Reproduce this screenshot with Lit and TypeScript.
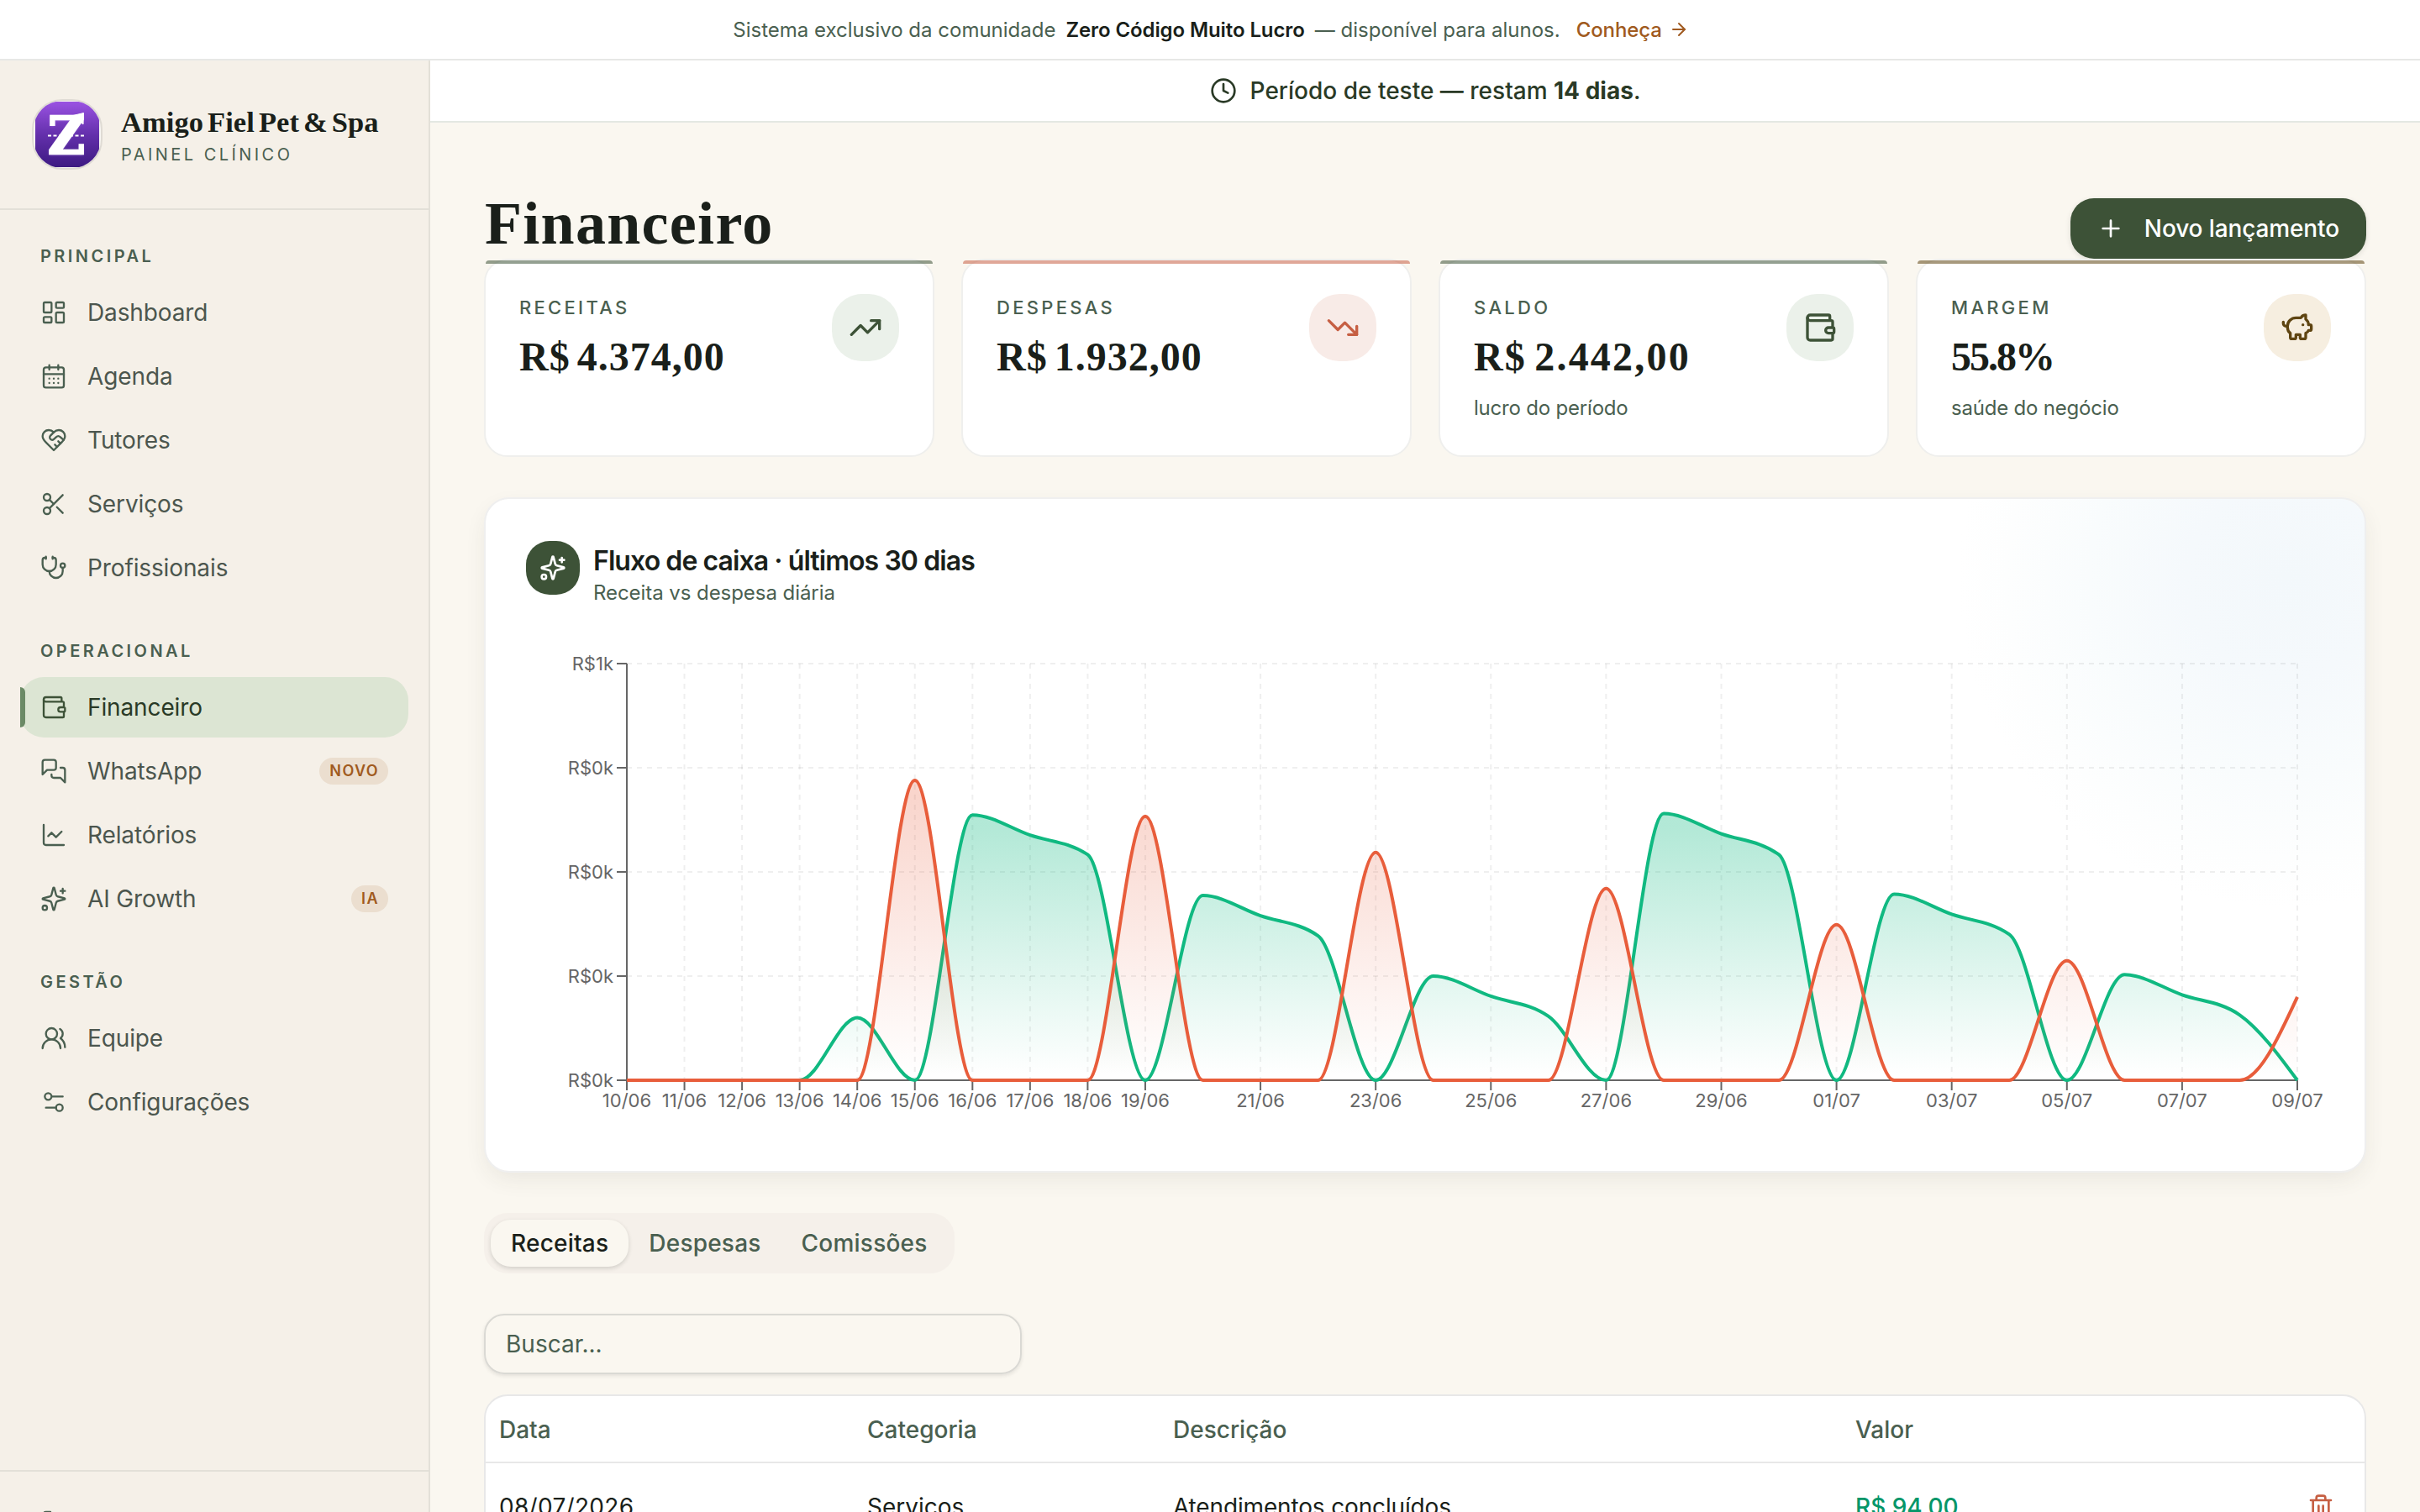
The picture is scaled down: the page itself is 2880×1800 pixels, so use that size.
import { LitElement, html, css, svg, nothing } from "lit";
import { customElement, property } from "lit/decorators.js";
import { styleMap } from "lit/directives/style-map.js";

// 24x24 stroke icons
const icons: Record<string, unknown> = {
    dashboard: svg`<rect width="7" height="9" x="3" y="3" rx="1"/><rect width="7" height="5" x="14" y="3" rx="1"/><rect width="7" height="9" x="14" y="12" rx="1"/><rect width="7" height="5" x="3" y="16" rx="1"/>`,
    calendar: svg`<path d="M8 2v4M16 2v4"/><rect width="18" height="18" x="3" y="4" rx="2"/><path d="M3 10h18M8 14h.01M12 14h.01M16 14h.01M8 18h.01M12 18h.01M16 18h.01"/>`,
    heart: svg`<path d="M19 14c1.49-1.46 3-3.21 3-5.5A5.5 5.5 0 0 0 16.5 3c-1.76 0-3 .5-4.5 2-1.5-1.5-2.74-2-4.5-2A5.5 5.5 0 0 0 2 8.5c0 2.3 1.5 4.05 3 5.5l7 7Z"/><path d="M12 5 9.04 7.96a2.17 2.17 0 0 0 0 3.08c.82.82 2.13.85 3 .07l2.07-1.9a2.82 2.82 0 0 1 3.79 0l2.96 2.66"/><path d="m18 15-2-2"/><path d="m15 18-2-2"/>`,
    scissors: svg`<circle cx="6" cy="6" r="3"/><path d="M8.12 8.12 12 12"/><path d="M20 4 8.12 15.88"/><circle cx="6" cy="18" r="3"/><path d="M14.8 14.8 20 20"/>`,
    stethoscope: svg`<path d="M11 2v2M5 2v2"/><path d="M5 3H4a2 2 0 0 0-2 2v4a6 6 0 0 0 12 0V5a2 2 0 0 0-2-2h-1"/><path d="M8 15a6 6 0 0 0 12 0v-3"/><circle cx="20" cy="10" r="2"/>`,
    wallet: svg`<path d="M19 7V4a1 1 0 0 0-1-1H5a2 2 0 0 0 0 4h15a1 1 0 0 1 1 1v4h-3a2 2 0 0 0 0 4h3a1 1 0 0 0 1-1v-2a1 1 0 0 0-1-1"/><path d="M3 5v14a2 2 0 0 0 2 2h15a1 1 0 0 0 1-1v-4"/>`,
    chat: svg`<path d="M14 9a2 2 0 0 1-2 2H6l-4 4V4a2 2 0 0 1 2-2h8a2 2 0 0 1 2 2z"/><path d="M18 9h2a2 2 0 0 1 2 2v11l-4-4h-6a2 2 0 0 1-2-2v-1"/>`,
    chart: svg`<path d="M3 3v16a2 2 0 0 0 2 2h16"/><path d="m19 9-5 5-4-4-3 3"/>`,
    sparkles: svg`<path d="M9.937 15.5A2 2 0 0 0 8.5 14.063l-6.135-1.582a.5.5 0 0 1 0-.962L8.5 9.936A2 2 0 0 0 9.937 8.5l1.582-6.135a.5.5 0 0 1 .963 0L14.063 8.5A2 2 0 0 0 15.5 9.937l6.135 1.581a.5.5 0 0 1 0 .964L15.5 14.063a2 2 0 0 0-1.437 1.437l-1.582 6.135a.5.5 0 0 1-.963 0z"/><path d="M20 3v4M22 5h-4"/><circle cx="4" cy="20" r="2"/>`,
    users: svg`<path d="M18 21a8 8 0 0 0-16 0"/><circle cx="10" cy="8" r="5"/><path d="M22 20c0-3.37-2-6.5-4-8a5 5 0 0 0-.45-8.3"/>`,
    settings: svg`<path d="M20 7h-9M14 17H5"/><circle cx="17" cy="17" r="3"/><circle cx="7" cy="7" r="3"/>`,
    logout: svg`<path d="M9 21H5a2 2 0 0 1-2-2V5a2 2 0 0 1 2-2h4"/><path d="m16 17 5-5-5-5"/><path d="M21 12H9"/>`,
    clock: svg`<circle cx="12" cy="12" r="10"/><path d="M12 6v6l4 2"/>`,
    arrow: svg`<path d="M5 12h14"/><path d="m12 5 7 7-7 7"/>`,
    plus: svg`<path d="M5 12h14M12 5v14"/>`,
    up: svg`<path d="M16 7h6v6"/><path d="m22 7-8.5 8.5-5-5L2 17"/>`,
    down: svg`<path d="M16 17h6v-6"/><path d="m22 17-8.5-8.5-5 5L2 7"/>`,
    pig: svg`<path d="M11 17h3v2a1 1 0 0 0 1 1h2a1 1 0 0 0 1-1v-3a3.16 3.16 0 0 0 2-2h1a1 1 0 0 0 1-1v-2a1 1 0 0 0-1-1h-1a5 5 0 0 0-2-4V3a4 4 0 0 0-3.2 1.6l-.3.4H11a6 6 0 0 0-6 6v1a5 5 0 0 0 2 4v3a1 1 0 0 0 1 1h2a1 1 0 0 0 1-1z"/><path d="M16 10h.01"/><path d="M2 8v1a2 2 0 0 0 2 2h1"/>`,
    trash: svg`<path d="M3 6h18M19 6v14a2 2 0 0 1-2 2H7a2 2 0 0 1-2-2V6M8 6V4a2 2 0 0 1 2-2h4a2 2 0 0 1 2 2v2M10 11v6M14 11v6"/>`,
};

@customElement("line-icon")
export class LineIcon extends LitElement
{
    static styles = css`
        :host {
            display: inline-flex;
            flex: none;
        }
        svg {
            fill: none;
            stroke: currentColor;
            stroke-linecap: round;
            stroke-linejoin: round;
        }
    `;

    @property()
    name = "";

    @property({ type: Number })
    size = 32;

    @property({ type: Number })
    weight = 2;

    render()
    {
        return html`
            <svg width=${this.size} height=${this.size} viewBox="0 0 24 24" stroke-width=${this.weight}>
                ${icons[this.name]}
            </svg>
        `;
    }
}

interface NavItem { icon: string; label: string; badge?: string; active?: boolean }

const nav: { title: string; items: NavItem[] }[] = [
    {
        title: "Principal",
        items: [
            { icon: "dashboard", label: "Dashboard" },
            { icon: "calendar", label: "Agenda" },
            { icon: "heart", label: "Tutores" },
            { icon: "scissors", label: "Serviços" },
            { icon: "stethoscope", label: "Profissionais" },
        ],
    },
    {
        title: "Operacional",
        items: [
            { icon: "wallet", label: "Financeiro", active: true },
            { icon: "chat", label: "WhatsApp", badge: "Novo" },
            { icon: "chart", label: "Relatórios" },
            { icon: "sparkles", label: "AI Growth", badge: "IA" },
        ],
    },
    {
        title: "Gestão",
        items: [
            { icon: "users", label: "Equipe" },
            { icon: "settings", label: "Configurações" },
        ],
    },
];

@customElement("app-sidebar")
export class AppSidebar extends LitElement
{
    static styles = css`
        :host {
            display: flex;
            flex-direction: column;
            box-sizing: border-box;
            width: 512px;
            background: #f5f0e8;
            border-right: 2px solid #e3e0d8;
        }
        header {
            display: flex;
            align-items: center;
            gap: 22px;
            box-sizing: border-box;
            height: 178px;
            padding: 0 0 0 38px;
            border-bottom: 2px solid #e3e0d8;
        }
        .logo {
            flex: none;
            width: 84px;
            height: 84px;
        }
        .logo text {
            font: bold 62px "DejaVu Serif", serif;
        }
        .brand {
            margin-top: 4px;
            font: bold 34.5px/40px "Liberation Serif", serif;
            letter-spacing: 0.05px;
            word-spacing: -3.6px;
            color: #1a1f1a;
            white-space: nowrap;
        }
        .tagline {
            margin-top: 4px;
            font-size: 20px;
            line-height: 30px;
            letter-spacing: 3.45px;
            text-transform: uppercase;
            color: #4a5f50;
        }
        nav {
            flex: 1;
            padding: 39px 24px 0;
        }
        h2 {
            margin: 0 0 15px 24px;
            font-size: 20px;
            line-height: 32px;
            font-weight: 600;
            letter-spacing: 3.45px;
            text-transform: uppercase;
            color: #4a5f50;
        }
        section {
            display: flex;
            flex-direction: column;
            margin-bottom: 47px;
        }
        .item {
            position: relative;
            display: flex;
            align-items: center;
            gap: 24px;
            height: 72px;
            padding: 0 24px;
            border-radius: 28px;
            font-size: 28px;
            letter-spacing: -0.12px;
            color: #4c564e;
        }
        .item + .item {
            margin-top: 4px;
        }
        .item line-icon {
            color: #4a5f50;
        }
        .item.active {
            background: #dce5d3;
            color: #2a3a26;
        }
        .item.active line-icon {
            color: #3d5237;
        }
        .item.active::before {
            content: "";
            position: absolute;
            left: 0;
            top: 12px;
            width: 6px;
            height: 48px;
            border-radius: 0 6px 6px 0;
            background: #6b8a66;
        }
        .badge {
            margin-left: auto;
            padding: 0 11px 0 12px;
            border-radius: 16px;
            background: #ebdecf;
            color: #a05a20;
            font-size: 18px;
            line-height: 32px;
            font-weight: 600;
            letter-spacing: 1.4px;
            text-transform: uppercase;
        }
        footer {
            box-sizing: border-box;
            height: 50px;
            padding: 24px;
            border-top: 2px solid #e3e0d8;
            overflow: hidden;
        }
    `;

    render()
    {
        return html`
            <header>
                ${this.renderLogo()}
                <div>
                    <div class="brand">Amigo Fiel Pet &amp; Spa</div>
                    <div class="tagline">Painel clínico</div>
                </div>
            </header>
            <nav>
                ${nav.map(group => html`
                    <section>
                        <h2>${group.title}</h2>
                        ${group.items.map(item => this.renderItem(item))}
                    </section>
                `)}
            </nav>
            <footer>
                <div class="item"><line-icon name="logout" weight="1.75"></line-icon>Sair</div>
            </footer>
        `;
    }

    renderItem(item: NavItem)
    {
        return html`
            <div class="item ${item.active ? "active" : ""}">
                <line-icon name=${item.icon} weight="1.75"></line-icon>
                ${item.label}
                ${item.badge ? html`<span class="badge">${item.badge}</span>` : nothing}
            </div>
        `;
    }

    renderLogo()
    {
        return html`
            <svg class="logo" viewBox="0 0 84 84">
                <defs>
                    <linearGradient id="violet" x1="0" y1="0" x2="0" y2="1">
                        <stop offset="0" stop-color="#9a52e2"/>
                        <stop offset="0.5" stop-color="#6430ac"/>
                        <stop offset="1" stop-color="#3d1a82"/>
                    </linearGradient>
                    <clipPath id="frame"><rect x="2" y="2" width="80" height="80" rx="34"/></clipPath>
                    <filter id="glow" x="-30%" y="-30%" width="160%" height="160%">
                        <feGaussianBlur stdDeviation="1.6"/>
                    </filter>
                </defs>
                <rect x="1" y="1" width="82" height="82" rx="35" fill="#f8f6f2" stroke="#dfdbd4" stroke-width="2"/>
                <rect x="4" y="3" width="76" height="78" fill="url(#violet)" clip-path="url(#frame)"/>
                <g fill="#c9a6ff" opacity="0.6" filter="url(#glow)">
                    <text x="19" y="66" textLength="44" lengthAdjust="spacingAndGlyphs">Z</text>
                </g>
                <g fill="#fff" stroke="#fff">
                    <text x="19" y="64.500" textLength="44" lengthAdjust="spacingAndGlyphs" stroke-width="2.4">Z</text>
                    <path d="M49 19.500 61.500 16.500 61 30Z" stroke-width="1"/>
                    <path d="M19 43.500h44" stroke-width="2" stroke-dasharray="4 2.500" fill="none"/>
                </g>
            </svg>
        `;
    }
}

const stats = [
    { label: "Receitas", value: "R$ 4.374,00", icon: "up", tone: "green", tracking: 1 },
    { label: "Despesas", value: "R$ 1.932,00", icon: "down", tone: "red", tracking: 1 },
    { label: "Saldo", value: "R$ 2.442,00", note: "lucro do período", icon: "wallet", tone: "green", tracking: 2.2 },
    { label: "Margem", value: "55.8%", note: "saúde do negócio", icon: "pig", tone: "amber", tracking: -2 },
];

@customElement("stat-card")
export class StatCard extends LitElement
{
    static styles = css`
        :host {
            position: relative;
            display: flex;
            justify-content: space-between;
            align-items: flex-start;
            box-sizing: border-box;
            height: 236px;
            padding: 40px;
            background: #fff;
            border: 2px solid #efefed;
            border-radius: 28px;
        }
        .line {
            position: absolute;
            inset: 0 0 auto;
            height: 4px;
            border-radius: 4px 4px 0 0;
            background: currentColor;
            opacity: 0.55;
        }
        .label {
            font-size: 22px;
            line-height: 32px;
            font-weight: 500;
            letter-spacing: 3.3px;
            text-transform: uppercase;
            color: #4a5f50;
        }
        .value {
            margin-top: 15px;
            font: bold 48px/56px "Liberation Serif", serif;
            word-spacing: -5px;
            color: #1a1f1a;
            white-space: nowrap;
        }
        .note {
            margin-top: 17px;
            font-size: 24px;
            line-height: 32px;
            letter-spacing: -0.2px;
            color: #4a5f50;
        }
        .icon {
            display: flex;
            align-items: center;
            justify-content: center;
            width: 80px;
            height: 80px;
            border-radius: 36px;
        }
        .green { color: #3d5237; }
        .green.icon { background: #ebf1ea; }
        .red { color: #c65f43; }
        .red.icon { background: #f8ebe7; }
        .amber { color: #5f4512; }
        .amber.icon { background: #f6eee0; }
    `;

    @property({ attribute: false })
    stat: any = {};

    render()
    {
        const s = this.stat;
        return html`
            <div class="line ${s.tone}"></div>
            <div>
                <div class="label">${s.label}</div>
                <div class="value" style=${styleMap({ letterSpacing: `${s.tracking}px` })}>${s.value}</div>
                ${s.note ? html`<div class="note">${s.note}</div>` : nothing}
            </div>
            <div class="icon ${s.tone}"><line-icon name=${s.icon} size="40"></line-icon></div>
        `;
    }
}

const days = [
    "10/06", "11/06", "12/06", "13/06", "14/06", "15/06", "16/06", "17/06", "18/06", "19/06",
    "20/06", "21/06", "22/06", "23/06", "24/06", "25/06", "26/06", "27/06", "28/06", "29/06",
    "30/06", "01/07", "02/07", "03/07", "04/07", "05/07", "06/07", "07/07", "08/07", "09/07",
];
const income = [
    0, 0, 0, 0, 90, 0, 382, 353, 325, 0, 266, 237, 208, 0, 150, 121, 92, 0, 384, 355,
    325, 0, 268, 239, 210, 0, 152, 123, 94, 0,
];
const expense = [
    0, 0, 0, 0, 0, 432, 0, 0, 0, 380, 0, 0, 0, 328, 0, 0, 0, 276, 0, 0,
    0, 224, 0, 0, 0, 172, 0, 0, 0, 120,
];

@customElement("cash-chart")
export class CashChart extends LitElement
{
    static styles = css`
        :host {
            display: block;
        }
        svg {
            display: block;
            overflow: visible;
        }
        text {
            font-size: 22px;
            fill: #666;
        }
    `;

    left = 120;
    top = 20;
    plotWidth = 1988;
    plotHeight = 496;

    x(i: number)
    {
        return this.left + i * this.plotWidth / (days.length - 1);
    }

    y(value: number)
    {
        return this.top + this.plotHeight * (1 - value / 600);
    }

    // monotone cubic through all the points
    curve(values: number[])
    {
        const n = values.length;
        const h = this.plotWidth / (n - 1);
        const ys = values.map(v => this.y(v));
        const slopes = ys.slice(1).map((y, i) => (y - ys[i]) / h);
        const tangents = ys.map((_, i) => {
            if (i === 0 || i === n - 1) return 0;
            const a = slopes[i - 1];
            const b = slopes[i];
            return (Math.sign(a) + Math.sign(b)) * Math.min(Math.abs(a), Math.abs(b), Math.abs(a + b) / 4) || 0;
        });
        tangents[0] = (3 * slopes[0] - tangents[1]) / 2;
        tangents[n - 1] = (3 * slopes[n - 2] - tangents[n - 2]) / 2;

        let d = `M${this.x(0)},${ys[0]}`;
        for (let i = 1; i < n; i++) {
            const x0 = this.x(i - 1);
            const x1 = this.x(i);
            d += `C${x0 + h / 3},${ys[i - 1] + tangents[i - 1] * h / 3} ${x1 - h / 3},${ys[i] - tangents[i] * h / 3} ${x1},${ys[i]}`;
        }
        return d;
    }

    area(values: number[])
    {
        return `${this.curve(values)}L${this.x(days.length - 1)},${this.y(0)}L${this.x(0)},${this.y(0)}Z`;
    }

    render()
    {
        const right = this.left + this.plotWidth;
        const bottom = this.top + this.plotHeight;
        const ticksX = days.map((_, i) => i).filter(i => i < 10 || i % 2 === 1);
        const ticksY = [0, 150, 300, 450, 600];
        return html`
            <svg width="2140" height="600">
                <defs>
                    <linearGradient id="in" x1="0" y1="0" x2="0" y2="1">
                        <stop offset="0.05" stop-color="#10b981" stop-opacity="0.32"/>
                        <stop offset="0.98" stop-color="#10b981" stop-opacity="0"/>
                    </linearGradient>
                    <linearGradient id="out" x1="0" y1="0" x2="0" y2="1">
                        <stop offset="0.05" stop-color="#e85d3b" stop-opacity="0.26"/>
                        <stop offset="0.98" stop-color="#e85d3b" stop-opacity="0"/>
                    </linearGradient>
                </defs>
                <g stroke="#1a1f1a" stroke-opacity="0.07" stroke-width="2" stroke-dasharray="6 6">
                    ${ticksY.map(v => svg`<line x1=${this.left} x2=${right} y1=${this.y(v)} y2=${this.y(v)}/>`)}
                    ${ticksX.map(i => svg`<line x1=${this.x(i)} x2=${this.x(i)} y1=${this.top} y2=${bottom}/>`)}
                </g>
                <g stroke="#666" stroke-width="2">
                    <line x1=${this.left} x2=${this.left} y1=${this.top} y2=${bottom}/>
                    <line x1=${this.left} x2=${right} y1=${bottom} y2=${bottom}/>
                    ${ticksY.map(v => svg`<line x1=${this.left - 12} x2=${this.left} y1=${this.y(v)} y2=${this.y(v)}/>`)}
                    ${ticksX.map(i => svg`<line x1=${this.x(i)} x2=${this.x(i)} y1=${bottom} y2=${bottom + 12}/>`)}
                </g>
                ${ticksY.map(v => svg`<text x=${this.left - 16} y=${this.y(v) + 8} text-anchor="end">R$${Math.round(v / 1000)}k</text>`)}
                ${ticksX.map(i => svg`<text x=${this.x(i)} y=${bottom + 32} text-anchor="middle">${days[i]}</text>`)}
                <path d=${this.area(income)} fill="url(#in)"/>
                <path d=${this.curve(income)} fill="none" stroke="#10b981" stroke-width="4"/>
                <path d=${this.area(expense)} fill="url(#out)"/>
                <path d=${this.curve(expense)} fill="none" stroke="#e85d3b" stroke-width="4"/>
            </svg>
        `;
    }
}

@customElement("app-root")
export class AppRoot extends LitElement
{
    static styles = css`
        :host {
            display: flex;
            flex-direction: column;
            box-sizing: border-box;
            width: 2880px;
            height: 1800px;
            overflow: hidden;
            background: #faf7f0;
            color: #1a1f1a;
            font-family: Inter, sans-serif;
            font-size: 28px;
        }
        .banner {
            display: flex;
            align-items: center;
            justify-content: center;
            flex: none;
            box-sizing: border-box;
            height: 72px;
            background: #fff;
            border-bottom: 2px solid #e7e8e6;
            font-size: 24px;
            color: #4a5f50;
        }
        .banner b {
            margin: 0 12px;
            font-weight: 600;
            letter-spacing: -0.1px;
            color: #1a1f1a;
        }
        .banner a {
            display: flex;
            align-items: center;
            gap: 8px;
            margin: 0 -2px 0 19px;
            font-weight: 500;
            letter-spacing: -0.1px;
            color: #a05a20;
        }
        .shell {
            display: flex;
            flex: 1;
            min-height: 0;
        }
        main {
            flex: 1;
            min-width: 0;
        }
        .trial {
            display: flex;
            align-items: center;
            justify-content: center;
            gap: 16px;
            box-sizing: border-box;
            height: 74px;
            background: #fff;
            border-bottom: 2px solid #e4e8e3;
            color: #2a3a26;
            font-weight: 500;
        }
        .trial b {
            font-weight: 700;
        }
        .page {
            padding: 90px 64px 0;
        }
        .heading {
            display: flex;
            justify-content: space-between;
            height: 72px;
        }
        h1 {
            margin: -12px 0 0 1px;
            font: bold 72px/84px "Liberation Serif", serif;
            letter-spacing: 1.3px;
        }
        .create {
            display: flex;
            align-items: center;
            gap: 24px;
            box-sizing: border-box;
            height: 72px;
            padding: 0 32px;
            border-radius: 28px;
            background: #3d5237;
            box-shadow: 0 2px 6px rgba(26, 31, 26, 0.12);
            color: #fff;
            font-weight: 500;
            letter-spacing: -0.12px;
        }
        .stats {
            display: grid;
            grid-template-columns: repeat(4, 1fr);
            gap: 32px;
        }
        .card {
            box-sizing: border-box;
            height: 804px;
            margin-top: 48px;
            padding: 50px 48px;
            border: 2px solid #efefef;
            border-radius: 30px;
            background: radial-gradient(circle 390px at 2142px 96px, #f3f8fb, #f5f9fc 30%, #f9fcfd 60%, #fdfefe 85%, #fff) #fff;
            background-clip: padding-box;
            box-shadow: 0 10px 28px -4px rgba(60, 60, 40, 0.09);
        }
        .card-head {
            display: flex;
            gap: 16px;
        }
        .card-icon {
            display: flex;
            align-items: center;
            justify-content: center;
            width: 64px;
            height: 64px;
            border-radius: 28px;
            background: #3d5237;
            color: #fff;
        }
        .card-title {
            padding-top: 2px;
            font-size: 32px;
            line-height: 44px;
            font-weight: 600;
            letter-spacing: -0.92px;
        }
        .card-note {
            font-size: 24px;
            line-height: 32px;
            letter-spacing: -0.06px;
            color: #4a5f50;
        }
        cash-chart {
            margin-top: 48px;
        }
        .tabs {
            display: flex;
            box-sizing: border-box;
            width: max-content;
            height: 72px;
            margin-top: 48px;
            padding: 8px;
            border-radius: 28px;
            background: #f5f0ea;
            color: #4a5f50;
            font-weight: 500;
            letter-spacing: 0.22px;
        }
        .tab {
            padding: 0 24px;
            line-height: 56px;
            border-radius: 24px;
        }
        .tab.active {
            background: #faf7f0;
            color: #1a1f1a;
            box-shadow: 0 2px 5px rgba(26, 31, 26, 0.16);
        }
        .search {
            display: flex;
            align-items: center;
            box-sizing: border-box;
            width: 640px;
            height: 72px;
            margin-top: 48px;
            padding: 0 24px;
            border: 2px solid #dad9d4;
            border-radius: 24px;
            box-shadow: 0 2px 4px rgba(26, 31, 26, 0.1);
            color: #4a5f50;
        }
        .table {
            margin-top: 24px;
            border: 2px solid #e8e8e8;
            border-radius: 28px;
            background: #fff;
        }
        .row {
            display: grid;
            grid-template-columns: 438px 364px 812px 1fr;
            align-items: center;
            box-sizing: border-box;
            height: 104px;
            padding: 0 16px;
        }
        .row.head {
            height: 80px;
            padding-top: 2px;
            border-bottom: 2px solid #e8e8e8;
            color: #4a5f50;
            font-weight: 500;
        }
        .date {
            letter-spacing: 0.3px;
        }
        .description {
            letter-spacing: -0.15px;
        }
        .amount {
            display: flex;
            align-items: center;
            justify-content: space-between;
            padding-right: 20px;
            color: #059669;
            font-weight: 500;
        }
        .amount line-icon {
            color: #c65f43;
        }
    `;

    render()
    {
        return html`
            <div class="banner">
                <span>Sistema exclusivo da comunidade</span>
                <b>Zero Código Muito Lucro</b>
                <span>— disponível para alunos.</span>
                <a>Conheça <line-icon name="arrow" size="24"></line-icon></a>
            </div>
            <div class="shell">
                <app-sidebar></app-sidebar>
                <main>
                    <div class="trial">
                        <line-icon name="clock"></line-icon>
                        <span>Período de teste — restam <b>14 dias</b>.</span>
                    </div>
                    <div class="page">
                        <div class="heading">
                            <h1>Financeiro</h1>
                            <div class="create"><line-icon name="plus"></line-icon>Novo lançamento</div>
                        </div>
                        <div class="stats">
                            ${stats.map(s => html`<stat-card .stat=${s}></stat-card>`)}
                        </div>
                        <div class="card">
                            <div class="card-head">
                                <div class="card-icon"><line-icon name="sparkles"></line-icon></div>
                                <div>
                                    <div class="card-title">Fluxo de caixa · últimos 30 dias</div>
                                    <div class="card-note">Receita vs despesa diária</div>
                                </div>
                            </div>
                            <cash-chart></cash-chart>
                        </div>
                        <div class="tabs">
                            <div class="tab active">Receitas</div>
                            <div class="tab">Despesas</div>
                            <div class="tab">Comissões</div>
                        </div>
                        <div class="search">Buscar...</div>
                        ${this.renderTable()}
                    </div>
                </main>
            </div>
        `;
    }

    renderTable()
    {
        return html`
            <div class="table">
                <div class="row head">
                    <span>Data</span><span>Categoria</span><span>Descrição</span><span>Valor</span>
                </div>
                <div class="row">
                    <span class="date">08/07/2026</span>
                    <span>Serviços</span>
                    <span class="description">Atendimentos concluídos</span>
                    <span class="amount">R$ 94,00 <line-icon name="trash"></line-icon></span>
                </div>
            </div>
        `;
    }
}
